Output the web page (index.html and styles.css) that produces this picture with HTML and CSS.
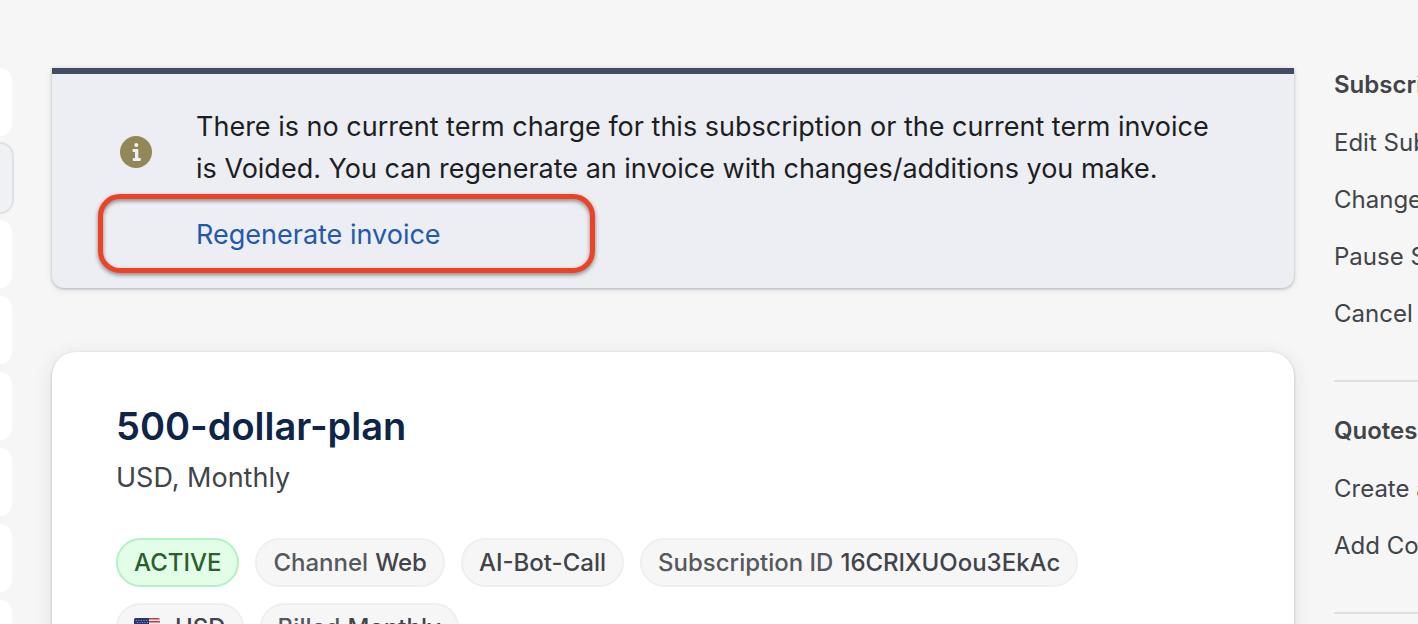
FILE: index.html
```html
<!DOCTYPE html>
<html lang="en">
<head>
<meta charset="utf-8">
<title>500-dollar-plan</title>
<link rel="stylesheet" href="styles.css">
</head>
<body>
<div class="page">
  <div class="tabs" aria-hidden="true">
    <div class="tab"></div>
    <div class="tab tab-selected"></div>
    <div class="tab"></div>
    <div class="tab"></div>
    <div class="tab"></div>
    <div class="tab"></div>
    <div class="tab"></div>
    <div class="tab"></div>
  </div>
  <main class="main">
    <section class="notice">
      <svg class="notice-icon" viewBox="0 0 32 32" aria-hidden="true">
        <circle cx="16" cy="16" r="16" fill="#928857"/>
        <circle cx="16.3" cy="9" r="2" fill="#eff0f3"/>
        <path d="M13.500 13h4a.8.8 0 0 1 .8.8V22h1.500a1 1 0 0 1 1 1v1a1 1 0 0 1-1 1h-6a1 1 0 0 1-1-1v-1a1 1 0 0 1 1-1H15v-6h-1.500a1 1 0 0 1-1-1v-1a1 1 0 0 1 1-1z" fill="#eff0f3"/>
      </svg>
      <div class="notice-body">
        <p class="notice-text">There is no current term charge for this subscription or the current term invoice is Voided. You can regenerate an invoice with changes/additions you make.</p>
        <a class="notice-link" href="#">Regenerate invoice</a>
      </div>
      <span class="highlight"></span>
    </section>
    <section class="card">
      <h1 class="title">500-dollar-plan</h1>
      <p class="subtitle">USD, Monthly</p>
      <ul class="chips">
        <li class="chip chip-active">ACTIVE</li>
        <li class="chip">Channel <span class="value">Web</span></li>
        <li class="chip"><span class="value">AI-Bot-Call</span></li>
        <li class="chip">Subscription ID <span class="value">16CRlXUOou3EkAc</span></li>
        <li class="chip">
          <svg class="flag" viewBox="0 0 26 20" aria-hidden="true">
            <rect width="26" height="20" rx="2" fill="#f4e9eb"/>
            <path d="M2 0h22a2 2 0 0 1 2 1.500H0A2 2 0 0 1 2 0zM0 3h26v1.500H0zM0 6h26v1.500H0zM0 9h26v1.500H0zM0 12h26v1.500H0zM0 15h26v1.500H0zM0 18h26v1.500H0z" fill="#bd3d4b"/>
            <path d="M2 0h13v10.500H0V2a2 2 0 0 1 2-2z" fill="#28386f"/>
            <path d="M2 2.500h12M3 4.500h12M2 6.500h12M3 8.500h12" stroke="#8e97b8" stroke-width="1" stroke-dasharray="1 1.500"/>
          </svg>
          <span class="value">USD</span>
        </li>
        <li class="chip">Billed <span class="value">Monthly</span></li>
      </ul>
    </section>
  </main>
  <aside class="actions">
    <section class="group">
      <h2 class="group-title">Subscription</h2>
      <ul class="links">
        <li><a href="#">Edit Subscription</a></li>
        <li><a href="#">Change Term</a></li>
        <li><a href="#">Pause Subscription</a></li>
        <li><a href="#">Cancel</a></li>
      </ul>
    </section>
    <section class="group">
      <h2 class="group-title">Quotes</h2>
      <ul class="links">
        <li><a href="#">Create a Quote</a></li>
        <li><a href="#">Add Coupons</a></li>
      </ul>
    </section>
  </aside>
</div>
</body>
</html>
```
FILE: styles.css
```css
* { box-sizing: border-box; }

body {
  margin: 0;
  background: #f6f6f6;
  color: #414449;
  font-family: Inter, "Liberation Sans", sans-serif;
}

h1, h2, p, ul { margin: 0; padding: 0; }
ul { list-style: none; }
a { color: inherit; text-decoration: none; }

.page {
  display: grid;
  grid-template-columns: 12px minmax(0, 1fr) 84px;
  gap: 40px;
  height: 100vh;
  padding-top: 68px;
  overflow: hidden;
}

.tabs { display: flex; flex-direction: column; gap: 8px; }

.tab {
  flex: none;
  height: 68px;
  background: #fff;
  border-radius: 0 12px 12px 0;
}

.tab-selected {
  background: #f0f1f4;
  box-shadow: 0 0 0 2px #e0e1e5;
}

.main { display: flex; flex-direction: column; gap: 64px; }

.notice {
  position: relative;
  display: flex;
  gap: 44px;
  padding: 32px 64px 32px 68px;
  background: #edeef3;
  border-top: 6px solid #424d63;
  border-radius: 0 0 12px 12px;
  box-shadow: 0 1px 3px rgba(40, 40, 70, 0.3), 0 2px 10px rgba(40, 40, 70, 0.07);
}

.notice-icon { flex: none; width: 32px; height: 32px; margin-top: 30px; }

.notice-body {
  display: flex;
  flex-direction: column;
  align-items: flex-start;
  gap: 24px;
  font-size: 27px;
  line-height: 42px;
}

.notice-text { color: #1c1e22; }
.notice-link { color: #2359ab; }

.highlight {
  position: absolute;
  left: 46px;
  top: 120px;
  width: 497px;
  height: 79px;
  border: 5px solid #ec4226;
  border-radius: 22px;
  filter: drop-shadow(0 2px 2px rgba(0, 0, 0, 0.45));
  pointer-events: none;
}

.card {
  flex: 1 0 auto;
  padding: 48px 64px;
  background: #fff;
  border-radius: 24px;
  box-shadow: 0 1px 3px rgba(40, 40, 70, 0.25), 0 4px 20px rgba(40, 40, 70, 0.1);
}

.title {
  color: #0e2549;
  font-size: 38px;
  font-weight: 600;
  line-height: 52px;
}

.subtitle { font-size: 27px; line-height: 52px; }

.chips { display: flex; flex-wrap: wrap; gap: 16px; margin: 34px 64px 0 0; }

.chip {
  display: flex;
  align-items: center;
  gap: 7px;
  height: 49px;
  padding: 0 16px;
  background: #f6f6f7;
  border: 2px solid #efeff0;
  border-radius: 25px;
  color: #55585d;
  font-size: 24px;
  font-weight: 500;
  white-space: nowrap;
}

.chip-active { background: #e3fee8; border-color: #b4f1c1; color: #2b602d; }
.value { color: #414449; }
.flag { width: 26px; height: 22px; margin-right: 8px; }

.actions { overflow: hidden; font-size: 24px; line-height: 34px; white-space: nowrap; }
.group { padding-bottom: 49px; margin-bottom: 32px; border-bottom: 2px solid #e0e1e5; }
.group-title { margin-bottom: 24px; font-size: 24px; font-weight: 600; line-height: 34px; }
.links { display: flex; flex-direction: column; gap: 23px; }
```
